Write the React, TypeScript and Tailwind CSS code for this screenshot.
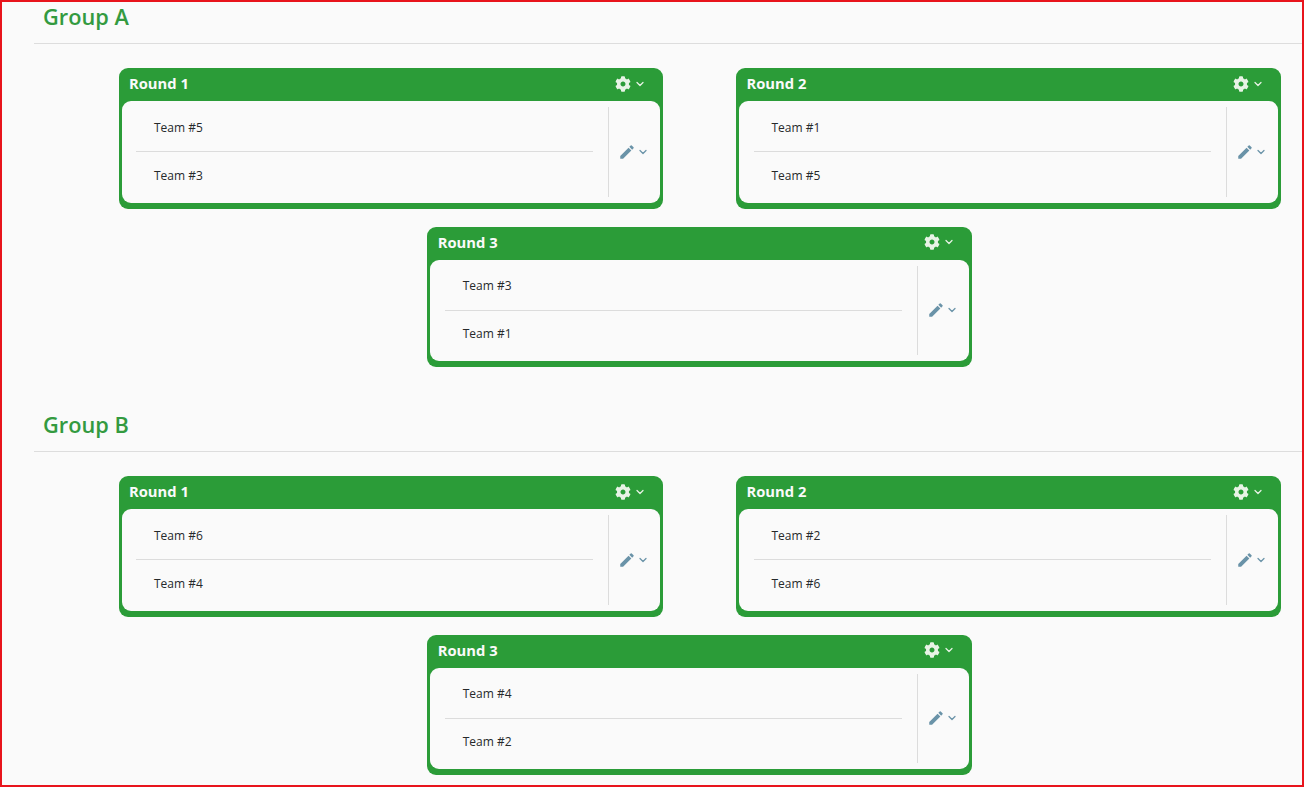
import { ChevronDown } from 'lucide-react';
import { FaCog } from 'react-icons/fa';
import { MdEdit } from 'react-icons/md';

type Round = { title: string; teams: [string, string] };

const groups: { name: string; rounds: Round[] }[] = [
  {
    name: 'Group A',
    rounds: [
      { title: 'Round 1', teams: ['Team #5', 'Team #3'] },
      { title: 'Round 2', teams: ['Team #1', 'Team #5'] },
      { title: 'Round 3', teams: ['Team #3', 'Team #1'] },
    ],
  },
  {
    name: 'Group B',
    rounds: [
      { title: 'Round 1', teams: ['Team #6', 'Team #4'] },
      { title: 'Round 2', teams: ['Team #2', 'Team #6'] },
      { title: 'Round 3', teams: ['Team #4', 'Team #2'] },
    ],
  },
];

function RoundCard({ round }: { round: Round }) {
  return (
    <div className="w-[544.5px] rounded-[9px] bg-[#2b9c38] px-[3px] pb-[6px]">
      <div className="flex h-[33px] items-center justify-between pb-[2px] pl-[7.5px] pr-[14px]">
        <span className="text-[14.75px] font-bold text-[#fafafa]">{round.title}</span>
        <div className="flex items-center gap-[3px] text-[#e8f3e6]">
          <FaCog className="size-[16px]" />
          <ChevronDown className="size-[12px]" strokeWidth={2.5} />
        </div>
      </div>
      <div className="flex h-[101.5px] rounded-[9px] bg-[#fafafa] py-[6px]">
        <div className="flex flex-1 flex-col pl-[14.5px] pr-[15px]">
          <div className="flex h-[45px] items-center border-b border-[#dcdcdc] pb-[2.5px] pl-[18px] text-xs text-[#26292b]">
            {round.teams[0]}
          </div>
          <div className="flex flex-1 items-center pt-[3px] pl-[18px] text-xs text-[#26292b]">
            {round.teams[1]}
          </div>
        </div>
        <div className="flex w-[52px] items-center gap-[1px] border-l border-[#dcdcdc] pl-[9px] text-[#6a93a8]">
          <MdEdit className="size-[18px]" />
          <ChevronDown className="size-[12px]" strokeWidth={2.5} />
        </div>
      </div>
    </div>
  );
}

function GroupSection({ name, rounds }: { name: string; rounds: Round[] }) {
  return (
    <section className="h-[408px]">
      <h2 className="h-[41px] pl-[9px] text-[21.75px] leading-[30px] font-semibold text-[#339a40]">{name}</h2>
      <hr className="border-[#dddddd]" />
      <div className="mt-[24px] ml-[63px] flex flex-wrap justify-center gap-x-[73px] gap-y-[18px]">
        {rounds.map((round) => (
          <RoundCard key={round.title} round={round} />
        ))}
      </div>
    </section>
  );
}

export default function App() {
  return (
    <div className="h-[787px] w-[1304px] overflow-hidden border-2 border-[#e8141c] bg-[#fafafa] font-['Open_Sans',sans-serif]">
      <div className="pl-[32px]">
        {groups.map((group) => (
          <GroupSection key={group.name} name={group.name} rounds={group.rounds} />
        ))}
      </div>
    </div>
  );
}
